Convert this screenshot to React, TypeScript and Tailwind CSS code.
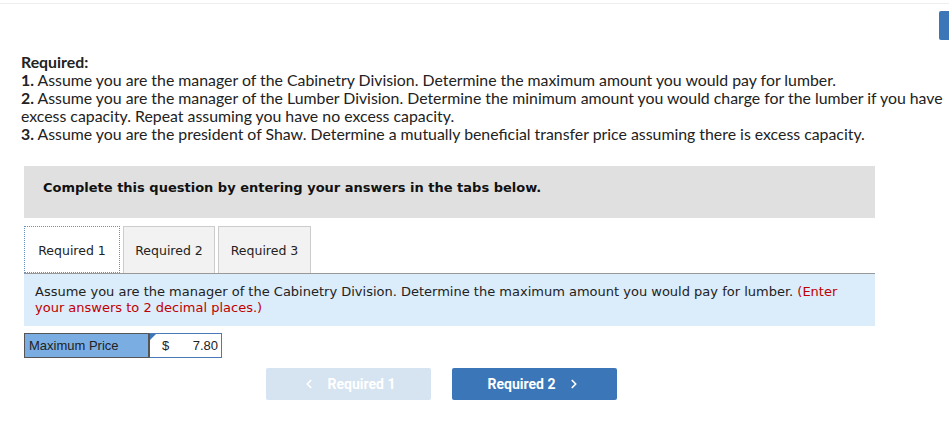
import React from 'react';
import { ChevronLeft, ChevronRight } from 'lucide-react';

const body = { fontFamily: '"Lato", "Liberation Sans", sans-serif' };
const verdana = { fontFamily: '"DejaVu Sans", Verdana, sans-serif' };
const arial = { fontFamily: '"Liberation Sans", Arial, sans-serif' };
const roboto = { fontFamily: 'Roboto, "Liberation Sans", sans-serif' };

const Tab = ({ label, active, w }: { label: string; active?: boolean; w: string }) =>
  active ? (
    <div className={`${w} h-[47px] pt-[3px] bg-white border border-dotted border-[#6a8fc4] flex items-center justify-center text-[12.5px] text-[#222]`}>
      {label}
    </div>
  ) : (
    <div className={`${w} h-[47px] pt-[3px] bg-[#f2f2f2] border border-[#cccccc] border-b-0 flex items-center justify-center text-[12.5px] text-[#222]`}>
      {label}
    </div>
  );

const App = () => {
  return (
    <div className="w-[949px] h-[429px] bg-white overflow-hidden relative">
      <div className="mt-[3px] h-px bg-[#eeeeee]" />
      <div className="flex justify-end mt-[7px]">
        <div className="w-[10px] h-[29px] bg-[#3a76b8] rounded-l-[2px]" />
      </div>

      <div className="pl-[21px] mt-[13px] text-[15.85px] leading-[18px] text-[#222]" style={body}>
        <p className="font-bold">Required:</p>
        <p className="whitespace-nowrap">
          <b>1.</b> Assume you are the manager of the Cabinetry Division. Determine the maximum amount you would pay for lumber.
        </p>
        <p className="whitespace-nowrap">
          <b>2.</b> Assume you are the manager of the Lumber Division. Determine the minimum amount you would charge for the lumber if you have
        </p>
        <p>excess capacity. Repeat assuming you have no excess capacity.</p>
        <p className="whitespace-nowrap">
          <b>3.</b> Assume you are the president of Shaw. Determine a mutually beneficial transfer price assuming there is excess capacity.
        </p>
      </div>

      <div className="ml-[24px] w-[851px]" style={verdana}>
        <div className="mt-[23px] h-[52px] bg-[#e0e0e0] pl-[19px] pt-[14px] text-[13px] leading-[16px] font-bold text-[#111]">
          Complete this question by entering your answers in the tabs below.
        </div>

        <div className="mt-[8px] flex items-end gap-[3px] border-b border-[#999999]">
          <Tab label="Required 1" active w="w-[96px]" />
          <Tab label="Required 2" w="w-[92px]" />
          <Tab label="Required 3" w="w-[93px]" />
        </div>

        <div className="h-[52px] bg-[#dbecfa] pl-[11px] pr-[30px] pt-[10px] text-[13px] leading-[16px] text-[#222]">
          Assume you are the manager of the Cabinetry Division. Determine the maximum amount you would pay for lumber.{' '}
          <span className="text-[#c00000]">(Enter your answers to 2 decimal places.)</span>
        </div>

        <div className="mt-[7px] flex h-[25px] text-[13px]" style={arial}>
          <div className="w-[125px] bg-[#7aaee3] border border-[#555] flex items-center pl-[4px] text-[#222]">
            Maximum Price
          </div>
          <div className="relative w-[73px] bg-white border border-[#4a7ab8] border-l-[#555] flex items-center justify-between pl-[12px] pr-[3px] text-[#222]">
            <span className="absolute left-0 top-0 w-0 h-0 border-t-[6px] border-r-[6px] border-t-[#3a76b8] border-r-transparent" />
            <span>$</span>
            <span>7.80</span>
          </div>
        </div>

        <div className="mt-[10px] flex gap-[21px] pl-[242px]" style={roboto}>
          <button className="w-[165px] h-[32px] rounded-[2px] bg-[#d6e3f1] text-white font-bold text-[14px] flex items-center justify-center gap-[12px]">
            <ChevronLeft size={14} strokeWidth={3} />
            <span>Required 1</span>
          </button>
          <button className="w-[165px] h-[32px] rounded-[2px] bg-[#3a76b8] text-white font-bold text-[14px] flex items-center justify-center gap-[12px]">
            <span>Required 2</span>
            <ChevronRight size={14} strokeWidth={3} />
          </button>
        </div>
      </div>
    </div>
  );
};

export default App;
